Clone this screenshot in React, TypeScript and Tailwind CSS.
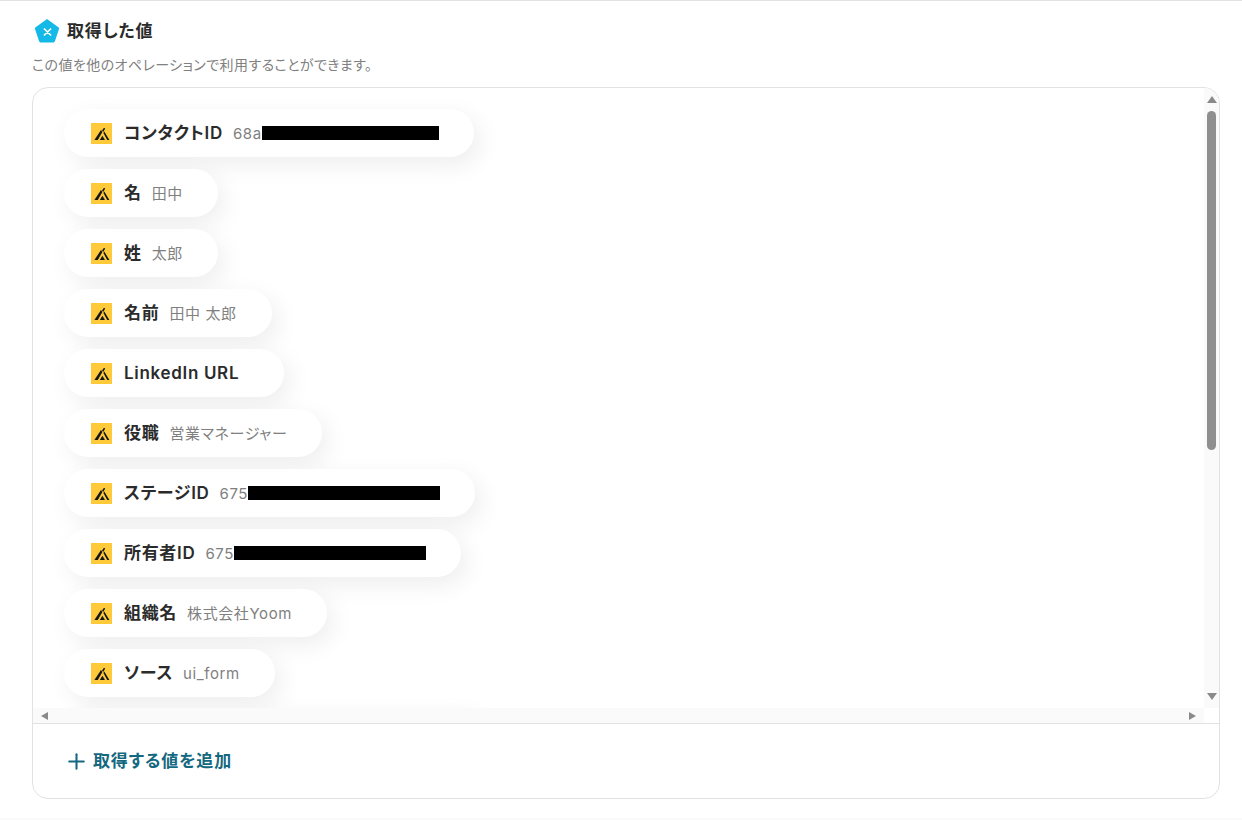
import React from 'react';
import { Plus } from 'lucide-react';

interface ValueRow {
  label: string;
  value?: string;
  redact?: string;
}

const rows: ValueRow[] = [
  { label: 'コンタクトID', value: '68a', redact: 'w-[177px]' },
  { label: '名', value: '田中' },
  { label: '姓', value: '太郎' },
  { label: '名前', value: '田中 太郎' },
  { label: 'LinkedIn URL' },
  { label: '役職', value: '営業マネージャー' },
  { label: 'ステージID', value: '675', redact: 'w-[192px]' },
  { label: '所有者ID', value: '675', redact: 'w-[192px]' },
  { label: '組織名', value: '株式会社Yoom' },
  { label: 'ソース', value: 'ui_form' },
  { label: '作成日時', value: '2025-08-20', redact: 'w-[150px]' },
];

const AppIcon = () => (
  <svg width="21" height="21" viewBox="0 0 21 21" className="shrink-0">
    <rect width="21" height="21" fill="#ffca3a" />
    <path d="M3.4 17 L10 7 L11.4 9 L6.8 17 Z" fill="#161616" />
    <path d="M8.8 17 L11.4 12.8 L14 17 Z" fill="#161616" />
    <path d="M12.4 10 L13.3 8.6 L18.4 17 L16.2 17 Z" fill="#161616" />
    <path d="M11 7.6 L13 4.8 L14.2 5.6 L12.2 8.9 Z" fill="#161616" />
  </svg>
);

const ValuePill = ({ row }: { row: ValueRow }) => (
  <div className="flex h-12 w-fit shrink-0 items-center gap-[10px] rounded-full bg-white pl-[27px] pr-[35px] shadow-[6px_8px_24px_rgba(0,0,0,0.07)]">
    <div className="flex items-center gap-3">
      <AppIcon />
      <span className="pt-[2px] text-[17px] font-semibold tracking-[0.04em] whitespace-nowrap text-[#2b2b2b]">{row.label}</span>
    </div>
    <div className="flex items-center text-[15px] tracking-[0.04em] whitespace-nowrap text-[#808080]">
      {row.value && <span className="pt-[2px]">{row.value}</span>}
      {row.redact && <span className={`h-[14px] bg-black ${row.redact}`} />}
    </div>
  </div>
);

export default function App() {
  return (
    <div className="h-[821px] overflow-hidden border-t border-[#e2e2e2] bg-white font-['Inter','Noto_Sans_CJK_JP',sans-serif] [font-feature-settings:'palt']">
      <div className="pl-[32px] pr-[22px] pt-[16px]">
        <div className="flex h-[28px] items-center gap-[7px] pl-[2px]">
          <svg width="26" height="26" viewBox="0 0 26 26" className="shrink-0">
            <path d="M13 1 L24.4 9.2 C25 9.7 25.2 10.3 25 11 L21 23 C20.7 23.9 20.1 24.5 19.2 24.5 L6.8 24.5 C5.9 24.5 5.3 23.9 5 23 L1 11 C0.8 10.3 1 9.7 1.6 9.2 Z" fill="#14b9e8" />
            <path d="M10.4 11 L16.6 17 M16.6 11 L10.4 17" stroke="#fff" strokeWidth="1.7" strokeLinecap="round" />
          </svg>
          <h2 className="pt-[2px] text-[17px] font-semibold tracking-[0.05em] text-[#2b2b2b]">取得した値</h2>
        </div>
        <p className="mt-[12px] text-[14px] leading-[16px] tracking-[0.03em] text-[#808080]">この値を他のオペレーションで利用することができます。</p>

        <div className="mt-[14px] flex h-[712px] flex-col overflow-hidden rounded-[16px] border border-[#e2e2e2]">
          <div className="flex h-[635px] shrink-0">
            <div className="flex flex-1 flex-col">
              <div className="flex h-[620px] flex-col gap-3 overflow-hidden pl-[31px] pt-[21px]">
                {rows.map((row) => (
                  <ValuePill key={row.label} row={row} />
                ))}
              </div>
              <div className="flex h-[15px] items-center justify-between bg-[#fafafa] pl-[8px] pr-[8px]">
                <span className="h-0 w-0 border-y-[4.5px] border-r-[7px] border-y-transparent border-r-[#8a8a8a]" />
                <span className="h-0 w-0 border-y-[4.5px] border-l-[7px] border-y-transparent border-l-[#8a8a8a]" />
              </div>
            </div>
            <div className="flex w-[15px] shrink-0 flex-col">
              <div className="flex h-[620px] flex-col items-center bg-[#fafafa] pt-[8px]">
                <span className="h-0 w-0 border-x-[5px] border-b-[7px] border-x-transparent border-b-[#8a8a8a]" />
                <span className="mt-[8px] h-[339px] w-[9px] rounded-full bg-[#8f8f8f]" />
                <span className="mt-auto mb-[8px] h-0 w-0 border-x-[5px] border-t-[7px] border-x-transparent border-t-[#8a8a8a]" />
              </div>
            </div>
          </div>
          <div className="flex flex-1 items-center gap-[4px] border-t border-[#e2e2e2] pl-[31px]">
            <Plus size={25} strokeWidth={2} className="text-[#14687f]" />
            <span className="pt-[2px] text-[17px] font-semibold tracking-[0.05em] text-[#14687f]">取得する値を追加</span>
          </div>
        </div>
      </div>
      <div className="mt-[19px] h-[2px] bg-[#fafafa]" />
    </div>
  );
}
